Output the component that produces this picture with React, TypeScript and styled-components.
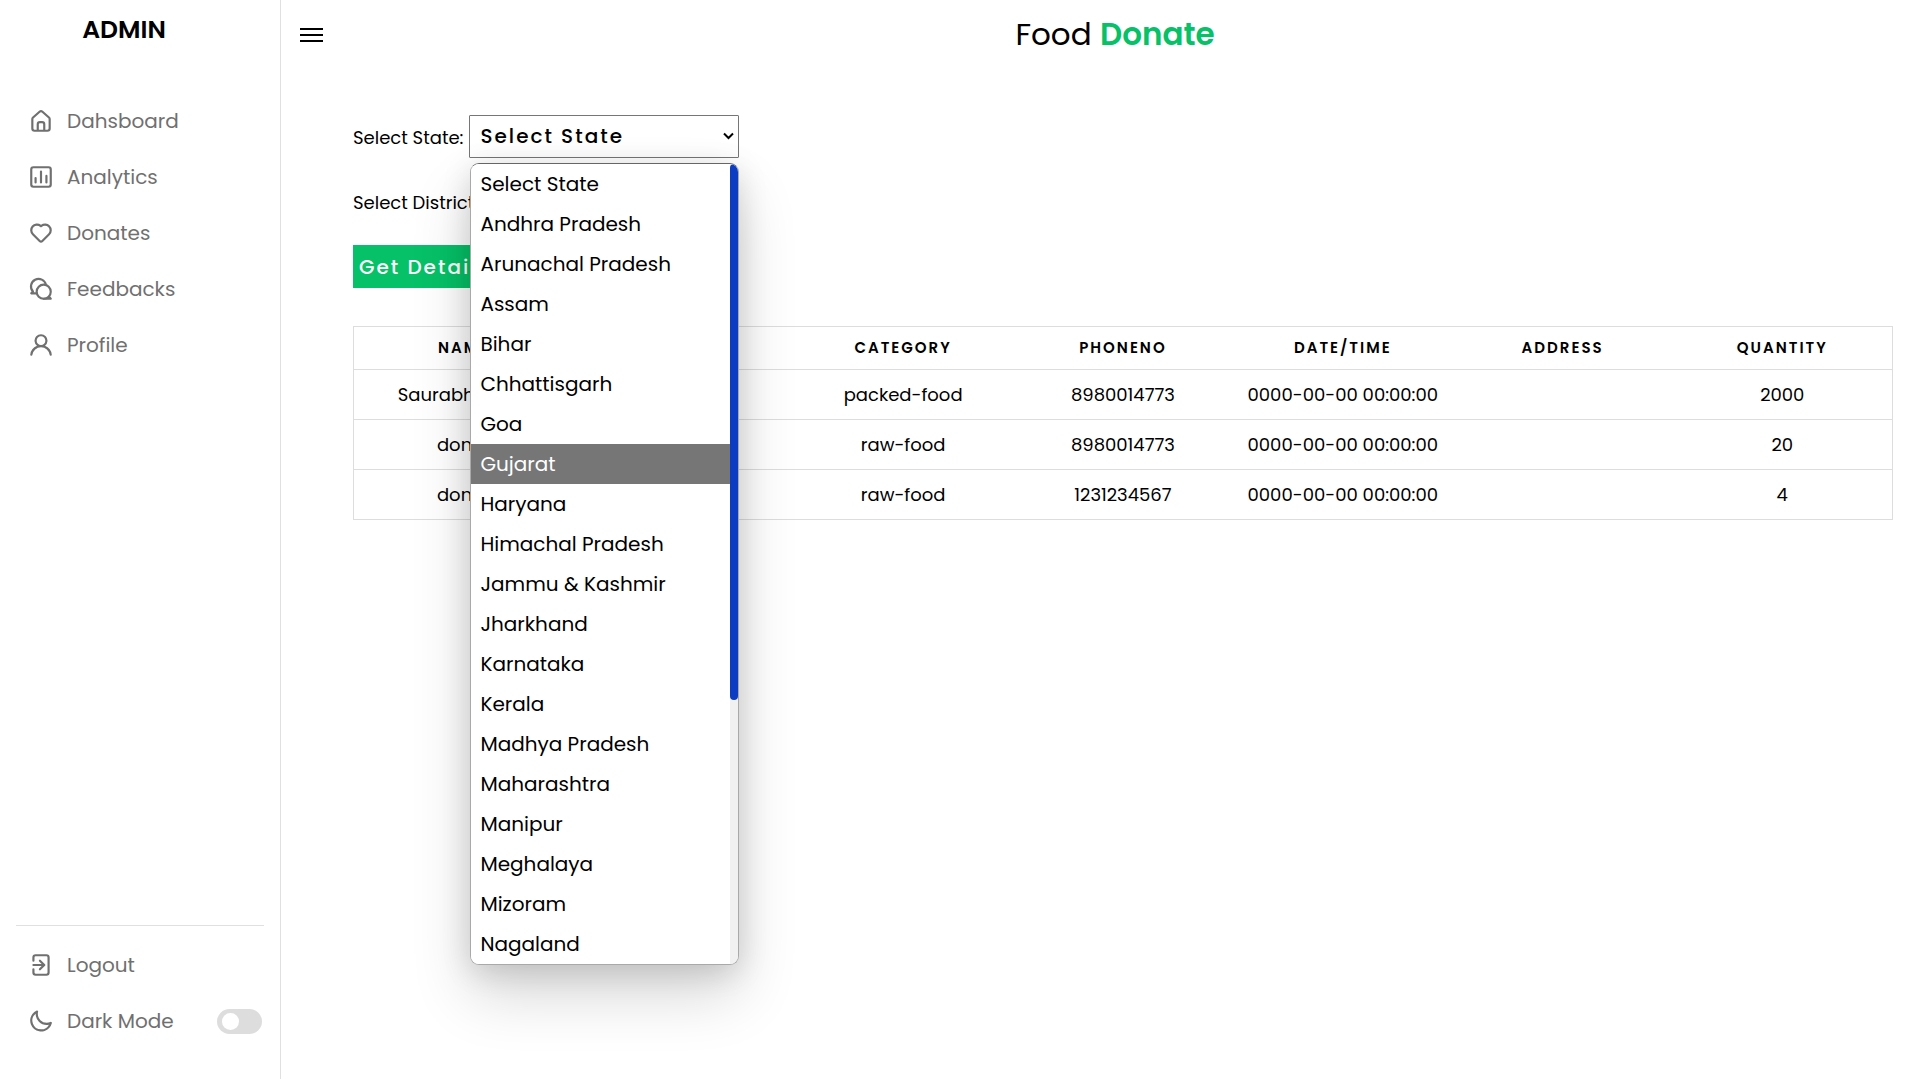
import React, { useState } from 'react';
import styled, { createGlobalStyle } from 'styled-components';

const GlobalStyle = createGlobalStyle`
  * { box-sizing: border-box; margin: 0; padding: 0; }
  body {
    min-height: 100vh;
    background: #fff;
    color: #000;
    font-family: Poppins, Inter, 'Open Sans', sans-serif;
  }
`;

const Page = styled.div`
  display: grid;
  grid-template-columns: 281px minmax(0, 1fr);
  min-height: 100vh;
`;

const Sidebar = styled.nav`
  display: flex;
  flex-direction: column;
  padding: 12px 16px 30px;
  border-right: 1px solid #e0e0e0;
`;

const Brand = styled.p`
  width: 216px;
  text-align: center;
  font-size: 25px;
  line-height: 36px;
  font-weight: 600;
`;

const Menu = styled.ul<{ $bottom?: boolean }>`
  list-style: none;
  margin-top: ${(p) => (p.$bottom ? 'auto' : '45px')};
  padding-top: ${(p) => (p.$bottom ? '11px' : '0')};
  border-top: ${(p) => (p.$bottom ? '1px solid #e0e0e0' : '0')};
`;

const MenuRow = styled.li`
  display: flex;
  align-items: center;
  justify-content: space-between;
  height: 56px;
`;

const MenuLink = styled.a`
  display: flex;
  align-items: center;
  gap: 13px;
  padding-left: 12px;
  color: #707070;
  font-size: 20px;
  line-height: 30px;
  text-decoration: none;
`;

const Icon = styled.svg`
  width: 26px;
  height: 26px;
  fill: currentColor;
`;

const Switch = styled.input`
  appearance: none;
  display: flex;
  align-items: center;
  width: 45px;
  height: 25px;
  margin-right: 2px;
  padding-left: 5px;
  border-radius: 25px;
  background: #ddd;
  cursor: pointer;

  &::before {
    content: '';
    width: 17px;
    height: 17px;
    border-radius: 50%;
    background: #fff;
  }

  &:checked {
    justify-content: flex-end;
    padding: 0 5px 0 0;
  }
`;

const Main = styled.main`
  display: flex;
  flex-direction: column;
`;

const TopBar = styled.header`
  display: grid;
  grid-template-columns: 26px 1fr;
  align-items: center;
  height: 68px;
  padding: 0 14px 0 18px;
`;

const ToggleButton = styled.button`
  display: flex;
  border: 0;
  background: none;
  color: #000;
  cursor: pointer;
`;

const Title = styled.h1`
  text-align: center;
  font-size: 31px;
  line-height: 46px;
  font-weight: 400;
`;

const Accent = styled.b`
  color: #06c167;
  font-weight: 600;
`;

const Content = styled.section`
  padding: 47px 26px 40px 72px;
`;

const Filters = styled.form`
  display: flex;
  flex-direction: column;
  align-items: flex-start;
  gap: 22px;
`;

const Field = styled.div`
  display: flex;
  align-items: center;
  gap: 6px;
`;

const Label = styled.label`
  padding-top: 2px;
  font-size: 18px;
  line-height: 26px;
`;

const SelectBox = styled.div<{ $width: number }>`
  position: relative;
  width: ${(p) => p.$width}px;
`;

const Select = styled.select`
  appearance: none;
  display: block;
  width: 100%;
  height: 43px;
  padding: 0 24px 2px 10px;
  border: 1px solid #767676;
  border-radius: 1px;
  background: #fff;
  color: #000;
  font: 500 20px/30px Poppins, Inter, sans-serif;
  letter-spacing: 2px;
`;

const Chevron = styled.svg`
  position: absolute;
  top: 17px;
  right: 5px;
  width: 11px;
  height: 8px;
  fill: none;
  stroke: #000;
  stroke-width: 2;
  pointer-events: none;
`;

const Popup = styled.div`
  position: absolute;
  z-index: 2;
  top: 48px;
  left: 1px;
  right: 0;
  display: flex;
  border: 1px solid #a9a9a9;
  border-top-color: #666;
  border-radius: 9px;
  background: #fff;
  box-shadow: 0 30px 60px rgba(0, 0, 0, 0.16), 0 6px 30px rgba(0, 0, 0, 0.14);
  overflow: hidden;
`;

const Options = styled.ul`
  flex: 1;
  list-style: none;
`;

const Option = styled.li<{ $active: boolean }>`
  padding: 5px 9px;
  background: ${(p) => (p.$active ? '#767676' : '#fff')};
  color: ${(p) => (p.$active ? '#fff' : '#000')};
  font-size: 20px;
  line-height: 30px;
  white-space: nowrap;
  cursor: default;
`;

const Track = styled.div`
  width: 8px;
  background: #f1f1f1;
`;

const Thumb = styled.div`
  height: 67%;
  border-radius: 12px;
  background: #0b3cc1;
`;

const Submit = styled.button`
  height: 43px;
  padding: 1px 6px 0;
  border: 0;
  background: #06c167;
  color: #fff;
  font: 500 20px/30px Poppins, Inter, sans-serif;
  letter-spacing: 2px;
  cursor: pointer;
`;

const Table = styled.table`
  width: 100%;
  margin-top: 38px;
  border: 1px solid #ddd;
  border-collapse: collapse;
  table-layout: fixed;
`;

const HeadCell = styled.th`
  height: 43px;
  font-size: 15px;
  line-height: 22px;
  font-weight: 600;
  letter-spacing: 2px;
  text-transform: uppercase;
`;

const Row = styled.tr`
  border-top: 1px solid #ddd;
`;

const Cell = styled.td`
  padding: 12px 10px;
  font-size: 18px;
  line-height: 25px;
  text-align: center;
  white-space: nowrap;
`;

const shapes: Record<string, React.ReactNode> = {
  estate: <path d="M20,8h0L14,2.74a3,3,0,0,0-4,0L4,8a3,3,0,0,0-1,2.26V19a3,3,0,0,0,3,3H18a3,3,0,0,0,3-3V10.25A3,3,0,0,0,20,8ZM14,20H10V15a1,1,0,0,1,1-1h2a1,1,0,0,1,1,1Zm5-1a1,1,0,0,1-1,1H16V15a3,3,0,0,0-3-3H11a3,3,0,0,0-3,3v5H6a1,1,0,0,1-1-1V10.25a1,1,0,0,1,.34-.75l6-5.25a1,1,0,0,1,1.32,0l6,5.25a1,1,0,0,1,.34.75Z" />,
  chart: (
    <g fill="none" stroke="currentColor" strokeWidth="2" strokeLinecap="round">
      <rect x="3" y="3" width="18" height="18" rx="2" />
      <path d="M7 13v4M12 7v10M17 11v6" />
    </g>
  ),
  heart: <path d="M20.16,5A6.29,6.29,0,0,0,12,4.36a6.27,6.27,0,0,0-8.16,9.48l6.21,6.22a2.78,2.78,0,0,0,3.9,0l6.21-6.22A6.27,6.27,0,0,0,20.16,5Zm-1.41,7.46-6.21,6.21a.76.76,0,0,1-1.08,0L5.25,12.43a4.29,4.29,0,0,1,0-6,4.27,4.27,0,0,1,6,0,1,1,0,0,0,1.42,0,4.27,4.27,0,0,1,6,0A4.29,4.29,0,0,1,18.75,12.43Z" />,
  comments: (
    <g fill="none" stroke="currentColor" strokeWidth="2" strokeLinecap="round" strokeLinejoin="round">
      <circle cx="14.5" cy="14.5" r="6.5" />
      <path d="M19.4 19.2L21 21H14.5" />
      <path d="M16.6 8.2A7 7 0 1 0 4.6 14.4L3 16H8" />
    </g>
  ),
  user: <path d="M15.71,12.71a6,6,0,1,0-7.42,0,10,10,0,0,0-6.22,8.18,1,1,0,0,0,2,.22,8,8,0,0,1,15.9,0,1,1,0,0,0,1,.89h.11a1,1,0,0,0,.88-1.1A10,10,0,0,0,15.71,12.71ZM12,12a4,4,0,1,1,4-4A4,4,0,0,1,12,12Z" />,
  signout: <path d="M4,12a1,1,0,0,0,1,1h7.59l-2.3,2.29a1,1,0,0,0,0,1.42,1,1,0,0,0,1.42,0l4-4a1,1,0,0,0,.21-.33,1,1,0,0,0,0-.76,1,1,0,0,0-.21-.33l-4-4a1,1,0,1,0-1.42,1.42L12.59,11H5A1,1,0,0,0,4,12ZM17,2H7A3,3,0,0,0,4,5V8A1,1,0,0,0,6,8V5A1,1,0,0,1,7,4H17a1,1,0,0,1,1,1V19a1,1,0,0,1-1,1H7a1,1,0,0,1-1-1V16a1,1,0,0,0-2,0v3a3,3,0,0,0,3,3H17a3,3,0,0,0,3-3V5A3,3,0,0,0,17,2Z" />,
  moon: <path d="M21.64,13a1,1,0,0,0-1.05-.14,8.05,8.05,0,0,1-3.37.73A8.15,8.15,0,0,1,9.08,5.49a8.59,8.59,0,0,1,.25-2A1,1,0,0,0,8,2.36,10.14,10.14,0,1,0,22,14.05,1,1,0,0,0,21.64,13Zm-9.5,6.69A8.14,8.14,0,0,1,7.08,5.22v.27A10.15,10.15,0,0,0,17.22,15.63a9.79,9.79,0,0,0,2.1-.22A8.11,8.11,0,0,1,12.14,19.73Z" />,
  bars: <path d="M1 7H24V9H1ZM1 13H24V15H1ZM1 19H24V21H1Z" />,
};

const Glyph = ({ name, box = 24 }: { name: string; box?: number }) => (
  <Icon viewBox={`0 0 ${box} ${box}`} aria-hidden="true">{shapes[name]}</Icon>
);

const links = [
  ['estate', 'Dahsboard'],
  ['chart', 'Analytics'],
  ['heart', 'Donates'],
  ['comments', 'Feedbacks'],
  ['user', 'Profile'],
];

const states = [
  'Select State', 'Andhra Pradesh', 'Arunachal Pradesh', 'Assam', 'Bihar',
  'Chhattisgarh', 'Goa', 'Gujarat', 'Haryana', 'Himachal Pradesh',
  'Jammu & Kashmir', 'Jharkhand', 'Karnataka', 'Kerala', 'Madhya Pradesh',
  'Maharashtra', 'Manipur', 'Meghalaya', 'Mizoram', 'Nagaland',
];

const columns = ['Name', 'Food', 'Category', 'phoneno', 'date/time', 'address', 'Quantity'];

const donations = [
  ['Saurabh Singh', 'rice', 'packed-food', '8980014773', '0000-00-00 00:00:00', '', '2000'],
  ['donor', 'rice', 'raw-food', '8980014773', '0000-00-00 00:00:00', '', '20'],
  ['donor', 'rice', 'raw-food', '1231234567', '0000-00-00 00:00:00', '', '4'],
];

export default function App() {
  const [state, setState] = useState('Select State');
  const [active, setActive] = useState('Gujarat');
  const [open, setOpen] = useState(true);

  const choose = (name: string) => {
    setState(name);
    setOpen(false);
  };

  return (
    <Page>
      <GlobalStyle />
      <Sidebar>
        <Brand>ADMIN</Brand>
        <Menu>
          {links.map(([icon, name]) => (
            <MenuRow key={name}>
              <MenuLink href="#"><Glyph name={icon} />{name}</MenuLink>
            </MenuRow>
          ))}
        </Menu>
        <Menu $bottom>
          <MenuRow>
            <MenuLink href="#"><Glyph name="signout" />Logout</MenuLink>
          </MenuRow>
          <MenuRow>
            <MenuLink as="label" htmlFor="dark"><Glyph name="moon" />Dark Mode</MenuLink>
            <Switch id="dark" type="checkbox" />
          </MenuRow>
        </Menu>
      </Sidebar>
      <Main>
        <TopBar>
          <ToggleButton type="button" aria-label="Toggle sidebar"><Glyph name="bars" box={26} /></ToggleButton>
          <Title>Food <Accent>Donate</Accent></Title>
        </TopBar>
        <Content>
          <Filters onSubmit={(e) => e.preventDefault()}>
            <Field>
              <Label htmlFor="state">Select State:</Label>
              <SelectBox $width={270}>
                <Select id="state" value={state} onChange={(e) => setState(e.target.value)}>
                  {states.map((name) => <option key={name}>{name}</option>)}
                </Select>
                <Chevron viewBox="0 0 11 8"><path d="M1 1.5L5.5 6L10 1.5" /></Chevron>
                {open && (
                  <Popup>
                    <Options role="listbox" aria-label="States">
                      {states.map((name) => (
                        <Option
                          key={name}
                          role="option"
                          aria-selected={name === active}
                          $active={name === active}
                          onMouseEnter={() => setActive(name)}
                          onClick={() => choose(name)}
                        >
                          {name}
                        </Option>
                      ))}
                    </Options>
                    <Track><Thumb /></Track>
                  </Popup>
                )}
              </SelectBox>
            </Field>
            <Field>
              <Label htmlFor="district">Select District:</Label>
              <SelectBox $width={180}>
                <Select id="district" />
              </SelectBox>
            </Field>
            <Submit type="submit">Get Details</Submit>
          </Filters>
          <Table>
            <thead>
              <tr>{columns.map((name) => <HeadCell key={name} scope="col">{name}</HeadCell>)}</tr>
            </thead>
            <tbody>
              {donations.map((row, i) => (
                <Row key={i}>{row.map((value, j) => <Cell key={j}>{value}</Cell>)}</Row>
              ))}
            </tbody>
          </Table>
        </Content>
      </Main>
    </Page>
  );
}
